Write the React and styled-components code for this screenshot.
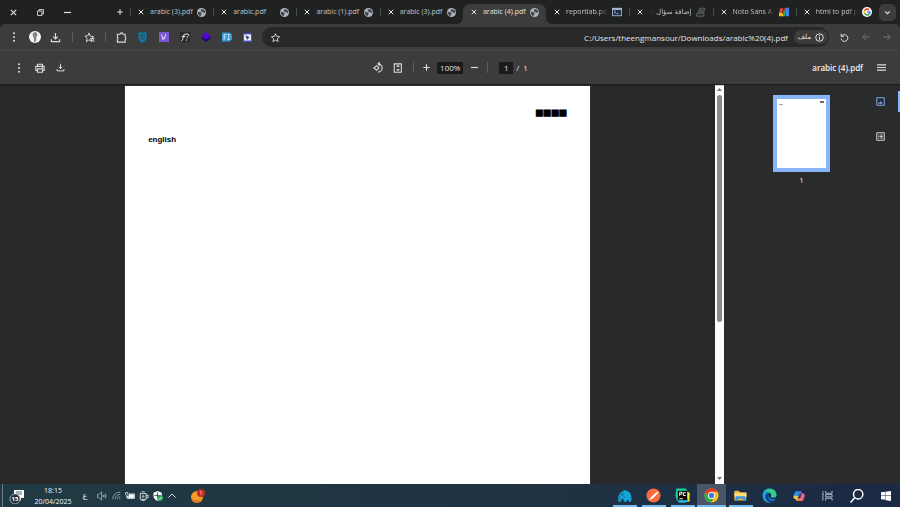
import React from 'react';
import styled, { createGlobalStyle, css } from 'styled-components';

const GlobalStyle = createGlobalStyle`
	* {
		box-sizing: border-box;
	}
	body {
		margin: 0;
		background: #282828;
		font-family: 'Open Sans', 'DejaVu Sans', sans-serif;
		font-size: 7px;
		color: #e3e3e3;
	}
	button, input {
		margin: 0;
		padding: 0;
		border: 0;
		background: none;
		color: inherit;
		font: inherit;
	}
	svg {
		display: block;
		flex: none;
	}
`;

const Screen = styled.div`
	display: flex;
	flex-direction: column;
	height: 100vh;
	overflow: hidden;
`;

/* ---------- tab strip ---------- */

const TabStrip = styled.header`
	display: flex;
	align-items: center;
	height: 24px;
	flex: none;
	background: #1f2221;
`;

const WindowButton = styled.button`
	display: flex;
	align-items: center;
	justify-content: center;
	width: 27px;
	height: 24px;
`;

const WindowControls = styled.div`
	display: flex;
	width: 110px;
`;

const NewTab = styled(WindowButton)`
	width: 20px;
`;

const Tabs = styled.nav`
	display: flex;
	flex: 1;
	min-width: 0;
	height: 24px;
`;

const Tab = styled.div`
	position: relative;
	display: flex;
	align-items: center;
	flex: 1;
	min-width: 0;
	margin-top: 4px;
	padding: 0 7px 4px 8px;
	color: #c3c5c4;
	${p => p.$divider && css`
		&::before {
			content: '';
			position: absolute;
			left: 0;
			top: 4px;
			width: 1px;
			height: 8px;
			background: #484b4a;
		}
	`}
	${p => p.$active && css`
		color: #e3e3e3;
		background: #3c3c3c;
		border-radius: 7px 7px 0 0;
		&::before, &::after {
			content: '';
			position: absolute;
			bottom: 0;
			width: 5px;
			height: 5px;
		}
		&::before {
			left: -5px;
			background: radial-gradient(circle at 0 0, transparent 4px, #3c3c3c 5px);
		}
		&::after {
			right: -5px;
			background: radial-gradient(circle at 100% 0, transparent 4px, #3c3c3c 5px);
		}
	`}
`;

const TabClose = styled.button`
	display: flex;
	width: 6px;
	margin-right: 6px;
	color: #e3e3e3;
`;

const TabTitle = styled.span`
	flex: 1;
	min-width: 0;
	height: 12px;
	line-height: 12px;
	margin-right: 4px;
	overflow: hidden;
	white-space: nowrap;
	direction: ${p => p.$rtl ? 'rtl' : 'ltr'};
	${p => p.$fade && css`
		mask-image: linear-gradient(${p.$rtl ? 'to left' : 'to right'}, #000 75%, transparent);
	`}
`;

const TabSearch = styled.button`
	display: flex;
	align-items: center;
	justify-content: center;
	width: 17px;
	height: 17px;
	margin-right: 4px;
	border-radius: 5px;
	background: #3c3c3c;
`;

/* ---------- browser toolbar ---------- */

const Toolbar = styled.div`
	display: flex;
	align-items: center;
	flex: none;
	height: 27px;
	padding: 0 3px;
	background: #3c3c3c;
	border-bottom: 1px solid #464646;
	border-radius: 5px 5px 0 0;
`;

const ToolbarBack = styled.div`
	flex: none;
	background: #1f2221;
`;

const ToolButton = styled.button`
	display: flex;
	align-items: center;
	justify-content: center;
	width: ${p => p.$narrow ? '19px' : '21px'};
	height: 20px;
	color: ${p => p.$dim ? '#7d7d7d' : '#dcdcdc'};
`;

const ToolDivider = styled.span`
	width: 1px;
	height: 10px;
	margin: 0 ${p => p.$tight ? '5px' : '6px'};
	background: #5c5c5c;
`;

const Omnibox = styled.div`
	display: flex;
	align-items: center;
	flex: 1;
	min-width: 0;
	height: 20px;
	margin: 0 5px 0 4px;
	padding: 0 1px 0 3px;
	border-radius: 10px;
	background: #282828;
`;

const Address = styled.input`
	flex: 1;
	min-width: 0;
	height: 16px;
	margin-right: 6px;
	outline: 0;
	text-align: right;
	font-size: 8px;
	color: #e6e6e6;
`;

const FileChip = styled.button`
	display: flex;
	align-items: center;
	justify-content: center;
	gap: 4px;
	width: 34px;
	height: 14px;
	border-radius: 7px;
	background: #3c3c3c;
	font-family: 'DejaVu Sans', sans-serif;
	font-size: 7px;
`;

/* ---------- pdf toolbar ---------- */

const PdfBar = styled.div`
	display: grid;
	grid-template-columns: 1fr auto 1fr;
	align-items: center;
	flex: none;
	height: 33px;
	padding: 0 8px;
	background: #3c3c3c;
	box-shadow: 0 1px 1px #1c1c1c;
	z-index: 1;
`;

const PdfGroup = styled.div`
	display: flex;
	align-items: center;
	justify-content: ${p => p.$end ? 'flex-end' : 'flex-start'};
	font-size: 8px;
`;

const PdfDivider = styled(ToolDivider)`
	height: 11px;
	margin: ${p => p.$wide ? '0 11px 0 3px' : '0 3px 0 6px'};
`;

const ZoomField = styled.input`
	width: 26px;
	height: 12px;
	margin: 0 2px 0 1px;
	background: #1b1b1b;
	text-align: center;
	font-size: 8px;
`;

const PageField = styled(ZoomField)`
	width: 14px;
	margin: 0 3px 0 0;
`;

const PageCount = styled.span`
	display: flex;
	gap: 4px;
	padding-right: 3px;
`;

const FileTitle = styled.h1`
	margin: 0 8px 0 0;
	font-size: 8px;
	font-weight: 600;
	color: #f1f1f1;
`;

/* ---------- document ---------- */

const Main = styled.main`
	display: flex;
	flex: 1;
	min-height: 0;
`;

const Viewer = styled.section`
	display: flex;
	justify-content: center;
	flex: 1;
	min-width: 0;
	padding-top: 2px;
	background: #282828;
`;

const Page = styled.article`
	width: 65%;
	padding: 20px 23px;
	background: #fff;
	box-shadow: 0 0 1px #777;
	color: #000;
	font-family: 'Liberation Sans', sans-serif;
	font-weight: 700;
	font-size: 8px;
`;

const MissingGlyphs = styled.p`
	margin: 0 0 15px;
	text-align: right;
	font-size: 13px;
	line-height: 14px;
	-webkit-text-stroke: 1px #000;
`;

const Line = styled.p`
	margin: 0;
`;

const ScrollTrack = styled.div`
	display: flex;
	flex-direction: column;
	align-items: center;
	width: 9px;
	flex: none;
	padding: 3px 0;
	background: #fcfcfc;
	color: #777;
`;

const ScrollRail = styled.div`
	flex: 1;
	width: 5px;
	margin: 3px 0;
`;

const ScrollThumb = styled.div`
	height: 60%;
	border-radius: 3px;
	background: #8b8b8b;
`;

const Sidebar = styled.aside`
	display: flex;
	flex: none;
	width: 176px;
	background: #292b2c;
`;

const Thumbs = styled.div`
	display: flex;
	flex-direction: column;
	align-items: center;
	flex: 1;
	padding: 11px 0 0 19px;
	font-size: 8px;
	line-height: 10px;
`;

const Thumb = styled.button`
	display: flex;
	justify-content: space-between;
	width: 57px;
	height: 77px;
	margin-bottom: 3px;
	padding: 1px 2px;
	border: 4px solid #8ab4f8;
	background: #fff;
`;

const ThumbMark = styled.span`
	width: 4px;
	height: ${p => p.$low ? '1px' : '2px'};
	margin-top: ${p => p.$low ? '4px' : '1px'};
	background: ${p => p.$low ? '#a5a5a5' : '#6c6c6c'};
`;

const SideTabs = styled.div`
	display: flex;
	flex-direction: column;
	gap: 14px;
	width: 40px;
	padding-top: 7px;
`;

const SideTab = styled.button`
	display: flex;
	align-items: center;
	justify-content: center;
	width: 40px;
	height: 21px;
	padding-left: ${p => p.$active ? '2px' : '0'};
	border-right: ${p => p.$active ? '2px solid #8ab4f8' : '0'};
	border-radius: 2px 0 0 2px;
	color: ${p => p.$active ? '#7faaf0' : '#d8d8d8'};
`;

/* ---------- taskbar ---------- */

const Taskbar = styled.footer`
	display: flex;
	justify-content: space-between;
	flex: none;
	height: 23px;
	background: linear-gradient(90deg, #203a43, #1f3343 60%, #1b2944);
`;

const Tray = styled.div`
	display: flex;
	align-items: center;
	margin-left: 2px;
	border-left: 1px solid #6b7d84;
`;

const TrayButton = styled.button`
	display: flex;
	align-items: center;
	justify-content: center;
	width: ${p => p.$wide ? '27px' : '14px'};
	height: 23px;
	color: ${p => p.$dim ? '#a9b4b8' : '#e9eef0'};
	font-size: 8px;
`;

const Clock = styled.time`
	width: 46px;
	margin-right: 2px;
	text-align: center;
	line-height: 11px;
	color: #f3f5f6;
`;

const Language = styled(TrayButton)`
	margin-right: 3px;
	font-family: 'DejaVu Sans', sans-serif;
`;

const Weather = styled(TrayButton)`
	margin-left: 5px;
`;

const Apps = styled.div`
	display: flex;
`;

const AppButton = styled.button`
	display: flex;
	align-items: center;
	justify-content: center;
	width: 29px;
	height: 23px;
	background: ${p => p.$active ? '#49566a' : 'none'};
	${p => p.$open && css`
		background-image: linear-gradient(#76b9ed, #76b9ed);
		background-repeat: no-repeat;
		background-position: bottom;
		background-size: ${p.$active ? '100%' : '24px'} 2px;
	`}
`;

const Icon = ({ size = 12, box = 24, w = 2, children, ...rest }) => (
	<svg
		width={size}
		height={size}
		viewBox={`0 0 ${box} ${box}`}
		fill="none"
		stroke="currentColor"
		strokeWidth={w}
		aria-hidden="true"
		{...rest}
	>
		{children}
	</svg>
);

const Cross = ({ size = 6 }) => <Icon size={size} w={4}><path d="M3 3l18 18M21 3L3 21" /></Icon>;

const Dots = () => (
	<Icon size={10} fill="currentColor" stroke="none">
		<circle cx="12" cy="3" r="2.4" /><circle cx="12" cy="12" r="2.4" /><circle cx="12" cy="21" r="2.4" />
	</Icon>
);

const Download = ({ size = 12 }) => (
	<Icon size={size} w={2.6}><path d="M12 2v13M7 10l5 5 5-5M3 16v5h18v-5" /></Icon>
);

const Plus = ({ size = 8 }) => <Icon size={size} w={4}><path d="M12 1v22M1 12h22" /></Icon>;

const Globe = () => (
	<Icon size={9} stroke="none">
		<circle cx="12" cy="12" r="12" fill="#aeb4ba" />
		<path d="M2 10l8 1 3 4-3 3v4C5 21 2 16 2 10zM12 3l6 1 4 6-1 4-4-3h-5V8l-3-1z" fill="#3f464c" />
	</Icon>
);

const Terminal = () => (
	<Icon size={10} stroke="none">
		<path fill="#aab8c8" d="M0 2h24v20H0z" />
		<path fill="#1c3148" d="M2 7h20v13H2z" />
		<path d="M5 9l4 3-4 3M11 16h4" stroke="#b6d0ea" strokeWidth="2" />
	</Icon>
);

const Stack = () => (
	<Icon size={10} w={2} stroke="#707573"><path d="M9 3h12l-3 12H5zM9 8h10M7 12h10M2 14v8h17v-6" /></Icon>
);

const NotoIcon = () => (
	<Icon size={10} stroke="none">
		<path fill="#ea4335" d="M3 3h8L7 14H0z" />
		<path fill="#fbbc04" d="M0 14h8l4 8H0z" />
		<path fill="#34a853" d="M10 8h5v14h-5z" />
		<path fill="#4285f4" d="M15 2h9v20h-8z" />
		<path fill="#ea4335" d="M13 3h4v6h-4z" />
	</Icon>
);

const GoogleIcon = () => (
	<Icon size={10} w={4}>
		<circle cx="12" cy="12" r="12" fill="#fff" stroke="none" />
		<path d="M17 7a7 7 0 0 0-11 2" stroke="#ea4335" />
		<path d="M6 9a7 7 0 0 0 0 6" stroke="#fbbc04" />
		<path d="M6 15a7 7 0 0 0 10 3" stroke="#34a853" />
		<path d="M12 12h7a7 7 0 0 1-3 6" stroke="#4285f4" />
	</Icon>
);

const tabs = [
	{ title: 'arabic (3).pdf', icon: <Globe />, divider: true },
	{ title: 'arabic.pdf', icon: <Globe />, divider: true },
	{ title: 'arabic (1).pdf', icon: <Globe />, divider: true },
	{ title: 'arabic (3).pdf', icon: <Globe />, divider: true },
	{ title: 'arabic (4).pdf', icon: <Globe />, active: true },
	{ title: 'reportlab.pdf', icon: <Terminal />, fade: true },
	{ title: 'إضافة سؤال -', icon: <Stack />, fade: true, rtl: true, divider: true },
	{ title: 'Noto Sans A', icon: <NotoIcon />, fade: true, divider: true },
	{ title: 'html to pdf p', icon: <GoogleIcon />, fade: true, divider: true },
];

const extensions = [
	{
		name: 'Extensions',
		icon: <Icon size={11} w={2.4}><path d="M3 5h6a3 3 0 0 1 6 0h5v6a3 3 0 0 1 0 5v6H3v-6a3 3 0 0 0 0-5z" /></Icon>
	},
	{
		name: 'Guard',
		icon: <Icon size={11} stroke="none">
			<path d="M3 1h18v11c0 5-5 9-9 12-4-3-9-7-9-12z" fill="#087eae" />
			<path d="M8 6h8v7l-4 5-4-5zM12 6v11" stroke="#33434c" strokeWidth="1.6" />
		</Icon>
	},
	{
		name: 'Visual',
		icon: <Icon size={10} stroke="none">
			<path d="M0 0h24v24H0z" fill="#7c57d1" />
			<path d="M6 6l4 12 7-13M10 18l5-5" stroke="#e8dcff" strokeWidth="2.4" />
		</Icon>
	},
	{
		name: 'Fonts',
		icon: <Icon size={10} stroke="none">
			<path d="M0 0h24v24H0z" fill="#292929" />
			<path d="M3 21c5 1 4-17 10-17M4 11h9M13 8c1-5 9-4 8 0-1 3-4 3-4 7M16 18v3" stroke="#f0f0f0" strokeWidth="2.4" />
		</Icon>
	},
	{
		name: 'Layers',
		icon: <Icon size={10} stroke="none">
			<path d="M12 0l12 11-12 7L0 11z" fill="#5308cf" />
			<path d="M0 11l12 7 12-7-1 4-11 9L1 15z" fill="#220078" />
		</Icon>
	},
	{
		name: 'Font inspector',
		icon: <Icon size={10} stroke="none">
			<path d="M0 1h18l6 5v12l-6 5H0z" fill="#3999d5" />
			<path d="M5 19V6h6M5 12h5M14 6h5M16 6v12M13 18h6" stroke="#d8f1ff" strokeWidth="2" />
		</Icon>
	},
	{
		name: 'Selector',
		icon: <Icon size={9} stroke="none">
			<rect width="24" height="24" rx="4" fill="#4b50d5" />
			<path d="M3 4h18v16H3z" fill="#fff" />
			<path d="M7 7l10 4-4 2-2 5zM13 13l4 4" fill="#29316b" stroke="#29316b" strokeWidth="1" />
		</Icon>
	},
];

const apps = [
	{
		name: 'Elephant',
		open: true,
		icon: <Icon size={14} box={32} stroke="none">
			<path d="M1 29C-1 18 2 9 10 6l4-4 6 2c10 3 12 13 10 25h-6v-4h-4v4h-6l-2-7-4 2-1 5z" fill="#16a3d8" />
			<path d="M12 8c-3 6 0 10 5 11M5 17l-1 9" stroke="#0870a0" strokeWidth="2" />
			<circle cx="8" cy="13" r="1.5" fill="#093b59" />
		</Icon>
	},
	{
		name: 'Postman',
		open: true,
		icon: <Icon size={15} box={32} stroke="none">
			<circle cx="16" cy="16" r="15" fill="#f76b3c" />
			<path d="M6 26l5-7 10-9 3 3-10 10zM21 10l4-3 1 3-2 3" fill="#fff" />
		</Icon>
	},
	{
		name: 'PyCharm',
		open: true,
		icon: <Icon size={15} box={32} stroke="none">
			<path d="M3 1h20l4 7-3 19H4L1 16z" fill="#1bd69a" />
			<path d="M21 6l10 4v19l-19 2 5-12z" fill="#f5ee3b" />
			<path d="M3 22l25-11v17l-6 3H8z" fill="#20bfe5" />
			<path d="M18 10l13 1-2 12H18z" fill="#eeee3a" />
			<path d="M6 6h20v20H6z" fill="#050505" />
			<path d="M10 17V9h5v4h-5M23 10h-5v6h5M9 23h8" stroke="#fff" strokeWidth="2" />
		</Icon>
	},
	{
		name: 'Chrome',
		open: true,
		active: true,
		icon: <Icon size={15} box={32} stroke="none">
			<circle cx="16" cy="16" r="15" fill="#fbc116" />
			<path d="M3 8a15 15 0 0 1 26 0H16a8 8 0 0 0-7 12z" fill="#e33b2e" />
			<path d="M3 8a15 15 0 0 0 12 23l7-11a8 8 0 0 1-13 0z" fill="#2da94f" />
			<circle cx="16" cy="16" r="7.5" fill="#fff" />
			<circle cx="16" cy="16" r="5.7" fill="#3979e8" />
		</Icon>
	},
	{
		name: 'File Explorer',
		open: true,
		icon: <Icon size={13} box={32} stroke="none">
			<path d="M1 4h11l3 4h15v20H1z" fill="#efb83d" />
			<path d="M1 10h30v10H1z" fill="#ffdc78" />
			<path d="M4 29V18h24v11h-6v-5H10v5z" fill="#3998df" />
		</Icon>
	},
	{
		name: 'Edge',
		icon: <Icon size={15} box={32} stroke="none">
			<circle cx="16" cy="16" r="15" fill="#1476bf" />
			<path d="M2 13C4 4 10 1 16 1c9 0 15 6 15 13 0 5-4 7-9 7-3 0-5-2-3-4 3-6-9-12-17-4z" fill="#38c886" />
			<path d="M2 13C5 4 12 2 18 3c-5 0-11 5-11 12 0 8 5 14 12 16C8 33 0 25 2 13z" fill="#1ca8dd" />
			<path d="M18 11c-6 2-8 12 1 16 4 2 8 0 10-3-5 8-14 9-20 1-5-7 0-15 9-14z" fill="#123f89" />
			<path d="M15 12c4-1 5 2 4 5-2 4 4 5 11 3l-1 3c-9 3-19-4-14-11z" fill="#1b2a44" />
		</Icon>
	},
	{
		name: 'Copilot',
		icon: <Icon size={12} box={32} stroke="none">
			<path d="M10 3h9c4 0 4 6 6 6h-9l-4 14H5c-4 0-5-4-4-8l3-8c1-3 3-4 6-4z" fill="#2793e7" />
			<path d="M3 15h12l-3 13c-3 2-5-1-6-5H5c-4 0-5-4-2-8z" fill="#e5c34d" />
			<path d="M22 9h5c4 0 5 4 4 8l-3 8c-1 3-3 4-6 4h-8c4 0 5-5 8-20z" fill="#e36697" />
			<path d="M18 3c5 0 5 6 9 6h-8l-4 13 3-19z" fill="#7c62df" />
			<path d="M13 22h13c-2 5-3 7-7 7h-8z" fill="#fa764e" />
		</Icon>
	},
	{
		name: 'Task view',
		icon: <Icon size={11} stroke="#b8c1cd" w={2}><path d="M8 2v5h14V2M8 10h14v5H8zM8 23v-5h14v5M2 2v3M2 9v14M0 8h4" /></Icon>
	},
	{
		name: 'Search',
		icon: <Icon size={14} stroke="#fff" w={2.6}><circle cx="14" cy="9" r="8" /><path d="M8 15l-7 8" /></Icon>
	},
	{
		name: 'Start',
		icon: <Icon size={10} fill="#fff" stroke="none"><path d="M0 3l10-1v9H0zM11 2l13-2v11H11zM0 12h10v9L0 20zM11 12h13v12l-13-2z" /></Icon>
	},
];

const TabRow = () => (
	<TabStrip>
		<WindowControls>
			<WindowButton aria-label="Close"><Cross size={7} /></WindowButton>
			<WindowButton aria-label="Restore">
				<Icon size={7} w={3}><path d="M2 7h15v15H2zM7 7V2h15v15h-5" /></Icon>
			</WindowButton>
			<WindowButton aria-label="Minimize"><Icon size={7} w={4}><path d="M0 12h24" /></Icon></WindowButton>
		</WindowControls>
		<NewTab aria-label="New tab"><Plus size={6} /></NewTab>
		<Tabs>
			{tabs.map((tab, i) => (
				<Tab key={i} $active={tab.active} $divider={tab.divider}>
					<TabClose aria-label="Close tab"><Cross /></TabClose>
					<TabTitle $fade={tab.fade} $rtl={tab.rtl}>{tab.title}</TabTitle>
					{tab.icon}
				</Tab>
			))}
		</Tabs>
		<TabSearch aria-label="Search tabs"><Icon size={7} w={4}><path d="M4 8l8 8 8-8" /></Icon></TabSearch>
	</TabStrip>
);

const BrowserBar = () => (
	<ToolbarBack>
		<Toolbar>
			<ToolButton aria-label="Menu"><Dots /></ToolButton>
			<ToolButton aria-label="Profile">
				<Icon size={12} stroke="none">
					<circle cx="12" cy="12" r="12" fill="#f4f4f4" />
					<path d="M9 4l5-1 2 4-2 5-1 9h-2l-1-8-2-4zM13 7l3 2" fill="#8a8a8a" stroke="#555" strokeWidth="1" />
				</Icon>
			</ToolButton>
			<ToolButton aria-label="Downloads"><Download size={11} /></ToolButton>
			<ToolDivider />
			<ToolButton aria-label="Bookmarks">
				<Icon size={11}><path d="M11 2l3 7 7 1-5 4 2 7-7-4-6 4 2-7-5-5 7-1zM14 13l3 8M18 12l4 9M18 14h5" /></Icon>
			</ToolButton>
			<ToolDivider $tight />
			{extensions.map(ext => (
				<ToolButton key={ext.name} aria-label={ext.name}>{ext.icon}</ToolButton>
			))}
			<Omnibox>
				<ToolButton aria-label="Bookmark this page">
					<Icon size={9} w={2.4}><path d="M12 2l3 7 8 1-6 5 2 8-7-4-7 4 2-8-6-5 8-1z" /></Icon>
				</ToolButton>
				<Address aria-label="Address" defaultValue="C:/Users/theengmansour/Downloads/arabic%20(4).pdf" />
				<FileChip>
					ملف
					<Icon size={9} w={2.6}><circle cx="12" cy="12" r="10" /><path d="M12 10v8M12 5v3" /></Icon>
				</FileChip>
			</Omnibox>
			<ToolButton aria-label="Reload">
				<Icon size={9} w={2.6}><path d="M3 2v7h7M4 9a9 9 0 1 1-1 6" /></Icon>
			</ToolButton>
			<ToolButton $dim aria-label="Back"><Icon size={8} w={2.6}><path d="M23 12H3M11 3l-9 9 9 9" /></Icon></ToolButton>
			<ToolButton $dim aria-label="Forward"><Icon size={8} w={2.6}><path d="M1 12h20M13 3l9 9-9 9" /></Icon></ToolButton>
		</Toolbar>
	</ToolbarBack>
);

const PdfToolbar = () => (
	<PdfBar>
		<PdfGroup>
			<ToolButton aria-label="More actions"><Dots /></ToolButton>
			<ToolButton aria-label="Print">
				<Icon size={10} w={2.6}><path d="M6 8V3h12v5M6 18H2V8h20v10h-4M6 14h12v8H6zM17 11h2" /></Icon>
			</ToolButton>
			<ToolButton aria-label="Download"><Download size={9} /></ToolButton>
		</PdfGroup>
		<PdfGroup>
			<ToolButton $narrow aria-label="Rotate">
				<Icon size={11} w={2.4}><path d="M8 8l5 5-5 5-6-5zM11 4a9 9 0 1 1 0 18M15 0l-4 4 4 4" /></Icon>
			</ToolButton>
			<ToolButton $narrow aria-label="Fit to page">
				<Icon size={10} w={2.6}><path d="M3 2h17v20H3zM9 9l3-3 3 3M9 15l3 3 3-3" /></Icon>
			</ToolButton>
			<PdfDivider />
			<ToolButton $narrow aria-label="Zoom in"><Plus size={7} /></ToolButton>
			<ZoomField aria-label="Zoom" defaultValue="100%" />
			<ToolButton $narrow aria-label="Zoom out"><Icon size={7} w={4}><path d="M0 12h24" /></Icon></ToolButton>
			<PdfDivider $wide />
			<PageField aria-label="Page" defaultValue="1" />
			<PageCount><span>/</span><span>1</span></PageCount>
		</PdfGroup>
		<PdfGroup $end>
			<FileTitle>arabic (4).pdf</FileTitle>
			<ToolButton aria-label="Sidebar"><Icon size={9} w={3}><path d="M0 5h24M0 12h24M0 19h24" /></Icon></ToolButton>
		</PdfGroup>
	</PdfBar>
);

const PdfDocument = () => (
	<Main>
		<Viewer>
			<Page>
				<MissingGlyphs>■■■■</MissingGlyphs>
				<Line>english</Line>
			</Page>
		</Viewer>
		<ScrollTrack>
			<Icon size={5} fill="currentColor" stroke="none"><path d="M12 5l12 14H0z" /></Icon>
			<ScrollRail><ScrollThumb /></ScrollRail>
			<Icon size={5} fill="currentColor" stroke="none"><path d="M12 19L0 5h24z" /></Icon>
		</ScrollTrack>
		<Sidebar>
			<Thumbs>
				<Thumb aria-label="Page 1"><ThumbMark $low /><ThumbMark /></Thumb>
				1
			</Thumbs>
			<SideTabs>
				<SideTab $active aria-label="Thumbnails">
					<Icon size={9} w={2.6}><path d="M2 2h20v20H2z" /><path d="M6 18v-5l3 3 4-5 5 7z" fill="currentColor" stroke="none" /></Icon>
				</SideTab>
				<SideTab aria-label="Outline">
					<Icon size={9} w={2.6}><path d="M2 2h20v20H2zM6 8h3M11 8h7M6 12h3M11 12h7M6 16h3M11 16h7" /></Icon>
				</SideTab>
			</SideTabs>
		</Sidebar>
	</Main>
);

const SystemBar = () => (
	<Taskbar>
		<Tray>
			<TrayButton $wide aria-label="15 notifications">
				<svg width="16" height="16" viewBox="0 0 16 16">
					<path d="M5 2h10v8h-3v3l-3-3H5z" fill="#fff" />
					<path d="M7 4h6M7 6h6" stroke="#52666d" />
					<circle cx="6" cy="11" r="5" fill="#24333a" stroke="#9ba8ad" strokeWidth="1" />
					<text x="6" y="13" textAnchor="middle" fontSize="6" fontWeight="700" fill="#fff">15</text>
				</svg>
			</TrayButton>
			<Clock>18:15<br />20/04/2025</Clock>
			<Language aria-label="Arabic keyboard">ع</Language>
			<TrayButton $dim aria-label="Volume">
				<Icon size={10} w={2}><path d="M1 8h4l6-6v20l-6-6H1zM14 9l4 6M18 9l-4 6M20 6q3 6 0 12" /></Icon>
			</TrayButton>
			<TrayButton $dim aria-label="Network">
				<Icon size={9} w={2}><path d="M2 22A19 19 0 0 1 22 3M8 22A14 14 0 0 1 22 9M14 22a8 8 0 0 1 8-7M19 22l3-2" /></Icon>
			</TrayButton>
			<TrayButton aria-label="Battery">
				<Icon size={10} w={2}><path d="M9 7h14v11H6v-6" /><path d="M10 9h11v7H8z" fill="#fff" /><path d="M1 4v4l3 3 3-3V4zM4 11v5" /></Icon>
			</TrayButton>
			<TrayButton aria-label="Devices">
				<Icon size={10} w={2}><path d="M3 6h14v14H3zM6 2h8M6 23h8M17 10h5v6h-5" /><circle cx="10" cy="13" r="2" /></Icon>
			</TrayButton>
			<TrayButton aria-label="Security">
				<Icon size={10} stroke="none">
					<path d="M11 0l10 4v7c0 6-4 10-10 13C5 21 1 17 1 11V4z" fill="#fff" />
					<path d="M11 3v17M3 11h16" stroke="#22383f" strokeWidth="2" />
					<circle cx="17" cy="17" r="7" fill="#24a85a" />
					<path d="M13 17l3 3 5-6" stroke="#fff" strokeWidth="2" />
				</Icon>
			</TrayButton>
			<TrayButton aria-label="Show hidden icons"><Icon size={8} w={2.6}><path d="M1 17L12 6l11 11" /></Icon></TrayButton>
			<Weather $wide aria-label="Weather alert">
				<svg width="14" height="14" viewBox="0 0 14 14">
					<circle cx="6" cy="8" r="6" fill="#f39a28" />
					<path d="M1 10a6 6 0 0 0 10 1c-3 1-7 1-10-1z" fill="#e66a24" />
					<circle cx="10" cy="4" r="4" fill="#c62b20" />
					<text x="10" y="6" textAnchor="middle" fontSize="5" fill="#fff">1</text>
				</svg>
			</Weather>
		</Tray>
		<Apps>
			{apps.map(app => (
				<AppButton key={app.name} aria-label={app.name} $open={app.open} $active={app.active}>
					{app.icon}
				</AppButton>
			))}
		</Apps>
	</Taskbar>
);

const App = () => (
	<Screen>
		<GlobalStyle />
		<TabRow />
		<BrowserBar />
		<PdfToolbar />
		<PdfDocument />
		<SystemBar />
	</Screen>
);

export default App;
